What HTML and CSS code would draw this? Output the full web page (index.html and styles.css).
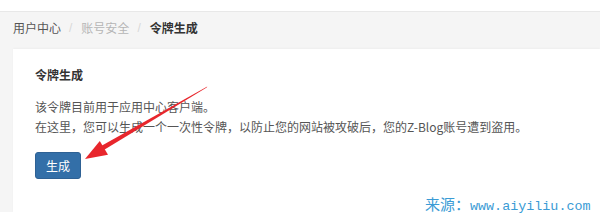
FILE: index.html
```html
<!DOCTYPE html>
<html lang="zh">
<head>
<meta charset="utf-8">
<link rel="stylesheet" href="styles.css">
</head>
<body>
<div class="top"></div>
<div class="main">
  <div class="crumbs">
    <span class="crumb">用户中心</span>
    <span class="sep">/</span>
    <span class="crumb muted">账号安全</span>
    <span class="sep">/</span>
    <span class="crumb active">令牌生成</span>
  </div>
  <div class="card">
    <h3 class="title">令牌生成</h3>
    <p class="desc">该令牌目前用于应用中心客户端。<br>在这里，您可以生成一个一次性令牌，以防止您的网站被攻破后，您的Z-Blog账号遭到盗用。</p>
    <button class="btn">生成</button>
  </div>
</div>
<svg class="arrow" width="600" height="213" viewBox="0 0 600 213">
  <polygon points="207.3,86.6 206.7,87.4 103,150.5 100.7,146.2" fill="#e8262c"/>
  <polygon points="85,159 99.8,140.9 108,154.7" fill="#e8262c"/>
</svg>
<div class="mark"><span class="cn">来源：</span><span class="url">www.aiyiliu.com</span></div>
</body>
</html>
```
FILE: styles.css
```css
html, body {
  margin: 0;
  padding: 0;
  background: #ffffff;
  font-family: "Noto Sans CJK SC", "Liberation Sans", sans-serif;
  font-size: 12px;
  color: #555;
}
.top {
  height: 11px;
  background: #ffffff;
}
.main {
  background: #f5f5f5;
  border-top: 1px solid #e8e8e8;
  padding-left: 13px;
  height: 201px;
  box-sizing: border-box;
}
.crumbs {
  height: 37px;
  box-sizing: border-box;
  padding-top: 7px;
  line-height: 18px;
  display: flex;
  align-items: flex-start;
}
.crumb {
  color: #555;
}
.crumb.muted {
  color: #b5b5b5;
}
.crumb.active {
  color: #333;
  font-weight: bold;
}
.sep {
  color: #d8d8d8;
  margin: 0 9px 0 8px;
  font-family: "Liberation Sans", sans-serif;
}
.card {
  background: #ffffff;
  height: 164px;
  box-sizing: border-box;
  padding: 17px 22px 0;
  box-shadow: 0 -1px 2px rgba(0,0,0,0.03);
}
.title {
  margin: 0;
  font-size: 12px;
  line-height: 18px;
  font-weight: bold;
  color: #333;
}
.desc {
  margin: 13px 0 0;
  line-height: 20px;
  color: #555;
}
.btn {
  display: block;
  margin-top: 15px;
  width: 46px;
  height: 27px;
  padding: 0;
  border: 1px solid #2e6194;
  border-radius: 3px;
  background: #336fa8;
  color: #ffffff;
  font-family: "Noto Sans CJK SC", sans-serif;
  font-size: 12px;
  line-height: 25px;
}
.arrow {
  position: absolute;
  left: 0;
  top: 0;
  pointer-events: none;
}
.mark {
  position: absolute;
  left: 425px;
  top: 194px;
  color: #3a9bd5;
  font-size: 16px;
  line-height: 18px;
  white-space: nowrap;
}
.mark .cn {
  font-family: "Noto Sans CJK SC", serif;
  font-size: 15px;
}
.mark .url {
  font-family: "Liberation Mono", monospace;
  font-size: 13.4px;
}
```
